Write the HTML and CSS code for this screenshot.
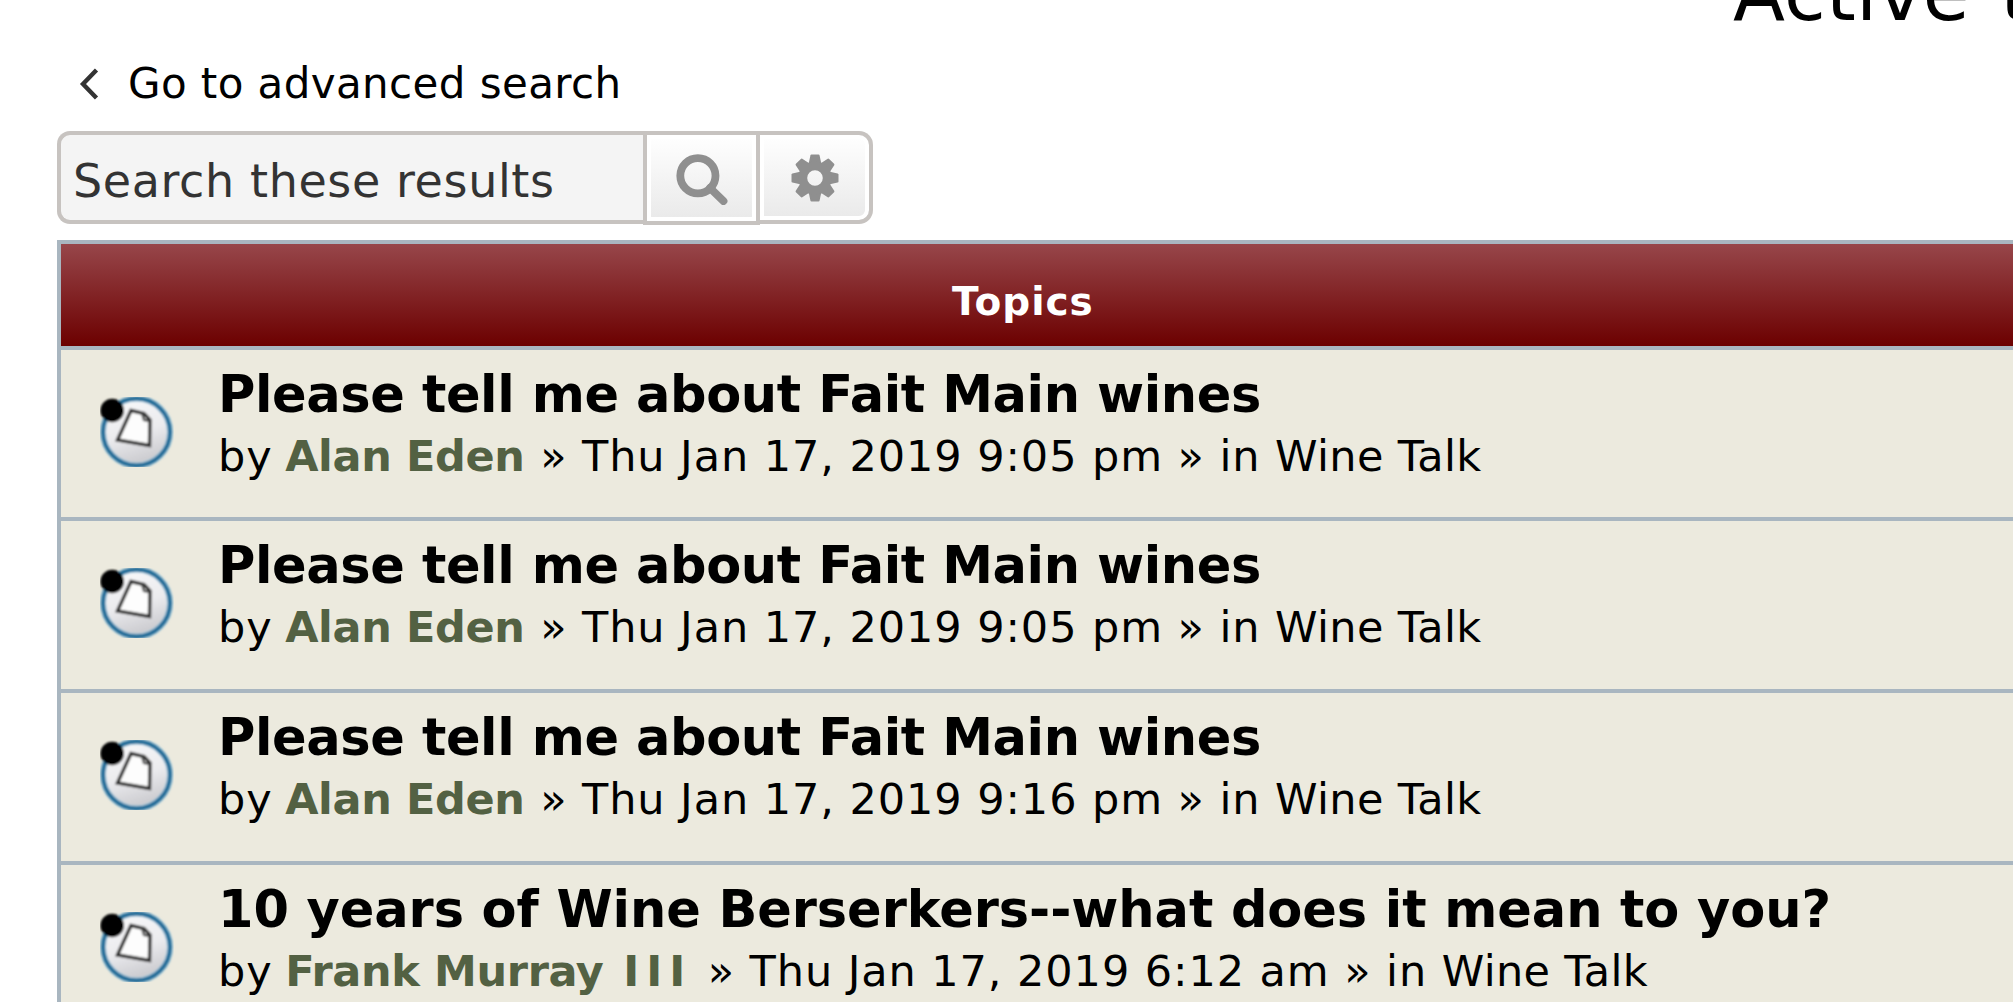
FILE: index.html
```
<!DOCTYPE html>
<html lang="en">
<head>
    <meta charset="UTF-8">
    <title>Active topics</title>
    <link rel="stylesheet" href="styles.css">
</head>
<body>
<!-- Shared topic icon -->
<svg class="defs" width="0" height="0">
    <defs>
        <linearGradient id="disc" x1="0" y1="0" x2="0.3" y2="1">
            <stop offset="0" stop-color="#fafafb"/>
            <stop offset="0.6" stop-color="#ebebee"/>
            <stop offset="1" stop-color="#cdcdd1"/>
        </linearGradient>
        <filter id="soft"><feGaussianBlur stdDeviation="1"/></filter>
        <symbol id="topic" viewBox="0 0 74 70">
            <g filter="url(#soft)">
                <circle cx="36.5" cy="35" r="33.5" fill="url(#disc)" stroke="#8fc0d8" stroke-width="6"/>
                <circle cx="36.5" cy="35" r="33.5" fill="none" stroke="#1d6a96" stroke-width="3.8"/>
                <path d="M31 13.5 L44 16.5 L50 23 L49.5 48.5 L17.5 43 Z" fill="#fdfdfd" stroke="#2c2c2c" stroke-width="3.4"/>
                <path d="M42 16 L44 23 L50 24" fill="none" stroke="#444" stroke-width="2.4"/>
                <circle cx="12.2" cy="13.5" r="11.8" fill="#000"/>
            </g>
        </symbol>
    </defs>
</svg>

<h2 class="page-title">Active topics</h2>

<a class="back-link" href="#">
    <svg width="24" height="34" viewBox="0 0 24 34"><path d="M17.5 3 L4 17 L17.5 31" fill="none" stroke="#333" stroke-width="4.4"/></svg>
    <span>Go to advanced search</span>
</a>

<form class="search-box">
    <input type="search" class="search-input" placeholder="Search these results">
    <button type="button" class="search-btn" title="Search">
        <svg width="54" height="54" viewBox="0 0 54 54">
            <circle cx="22.9" cy="24.7" r="17.6" fill="none" stroke="#8f8f8f" stroke-width="7.8"/>
            <path d="M35 37 L48.4 50" stroke="#8f8f8f" stroke-width="8" stroke-linecap="round"/>
        </svg>
    </button>
    <button type="button" class="search-btn last" title="Advanced search">
        <svg width="48" height="48" viewBox="-24 -24 48 48">
            <g fill="#8f8f8f">
                <path id="tooth" d="M-6.2 -15 L-4.6 -22.6 Q-4.4 -23.5 -3.5 -23.5 H3.5 Q4.4 -23.5 4.6 -22.6 L6.2 -15 Z"/>
                <use href="#tooth" transform="rotate(45)"/>
                <use href="#tooth" transform="rotate(90)"/>
                <use href="#tooth" transform="rotate(135)"/>
                <use href="#tooth" transform="rotate(180)"/>
                <use href="#tooth" transform="rotate(225)"/>
                <use href="#tooth" transform="rotate(270)"/>
                <use href="#tooth" transform="rotate(315)"/>
            </g>
            <circle r="12.2" fill="none" stroke="#8f8f8f" stroke-width="8.8"/>
        </svg>
    </button>
</form>

<div class="forum">
    <div class="forum-head">Topics</div>
    <div class="row">
        <svg class="icon"><use href="#topic"/></svg>
        <div class="topic">
            <a class="topic-title" href="#">Please tell me about Fait Main wines</a>
            <p class="meta">by <a class="author" href="#">Alan Eden</a> » Thu Jan 17, 2019 9:05 pm » in <a class="forum-link" href="#">Wine Talk</a></p>
        </div>
    </div>
    <div class="row">
        <svg class="icon"><use href="#topic"/></svg>
        <div class="topic">
            <a class="topic-title" href="#">Please tell me about Fait Main wines</a>
            <p class="meta">by <a class="author" href="#">Alan Eden</a> » Thu Jan 17, 2019 9:05 pm » in <a class="forum-link" href="#">Wine Talk</a></p>
        </div>
    </div>
    <div class="row">
        <svg class="icon"><use href="#topic"/></svg>
        <div class="topic">
            <a class="topic-title" href="#">Please tell me about Fait Main wines</a>
            <p class="meta">by <a class="author" href="#">Alan Eden</a> » Thu Jan 17, 2019 9:16 pm » in <a class="forum-link" href="#">Wine Talk</a></p>
        </div>
    </div>
    <div class="row">
        <svg class="icon"><use href="#topic"/></svg>
        <div class="topic">
            <a class="topic-title long" href="#">10 years of Wine Berserkers--what does it mean to you?</a>
            <p class="meta">by <a class="author" href="#">Frank Murray <span class="numeral">III</span></a> » Thu Jan 17, 2019 6:12 am » in <a class="forum-link" href="#">Wine Talk</a></p>
        </div>
    </div>
</div>
</body>
</html>
```
FILE: styles.css
```
* { box-sizing: border-box; }
html { overflow: hidden; }
body { margin: 0; height: 1002px; overflow: hidden; background: #fff; color: #000; font-family: Verdana, "DejaVu Sans", sans-serif; white-space: nowrap; }
a { color: inherit; text-decoration: none; }
svg { display: block; flex: none; }
.defs { position: absolute; }

.page-title { margin: -40px 0 0 1733px; font-size: 76px; font-weight: normal; line-height: 67px; letter-spacing: 0.27px; word-spacing: 6px; }

.back-link { display: flex; align-items: center; gap: 25px; margin: 31px 0 0 79px; height: 52px; font-size: 42px; line-height: 52px; letter-spacing: 0.4px; }

/* Search box */
.search-box { display: flex; width: 816px; height: 93px; margin: 21px 0 0 57px; }
.search-input { width: 586px; height: 93px; margin: 0; padding: 7px 0 0 12px; border: 4px solid #c7c3c0; border-right: none; border-radius: 13px 0 0 13px; background: #f4f4f4; font: inherit; font-size: 46px; letter-spacing: 0.62px; outline: none; appearance: none; }
.search-input::placeholder { color: #333; opacity: 1; }
.search-btn { display: flex; align-items: center; justify-content: center; width: 117px; height: 94px; margin: 0; padding: 0; border: 4px solid #c7c3c0; background: linear-gradient(#fff, #e9e9e9); box-shadow: inset 0 0 0 4px #fff; }
.search-btn.last { width: 113px; height: 93px; border-left: none; border-radius: 0 14px 14px 0; }

/* Topic list */
.forum { margin: 16px 0 0 57px; border: 4px solid #a9b6c0; border-right: none; background: #eceade; }
.forum-head { height: 101.7px; padding: 0 0 0 891px; background: linear-gradient(#97464a, #6c0000); color: #fff; font-size: 39px; font-weight: bold; line-height: 115px; letter-spacing: 1px; }
.row { display: flex; height: 171.75px; padding: 14px 0 0 39px; border-top: 4px solid #a9b6c0; }
.icon { width: 74px; height: 70px; margin: 33px 44px 0 0; }
.topic-title { display: block; font-size: 51px; font-weight: bold; line-height: 62px; letter-spacing: -0.38px; }
.topic-title.long { letter-spacing: -0.07px; }
.meta { margin: 0; font-size: 43px; line-height: 60px; letter-spacing: 0.92px; }
.author { margin: 0 1px 0 -2px; color: #536143; font-weight: bold; letter-spacing: -0.35px; }
.numeral { margin-left: 5px; letter-spacing: 7px; }
.forum-link { letter-spacing: 0.35px; }
```
